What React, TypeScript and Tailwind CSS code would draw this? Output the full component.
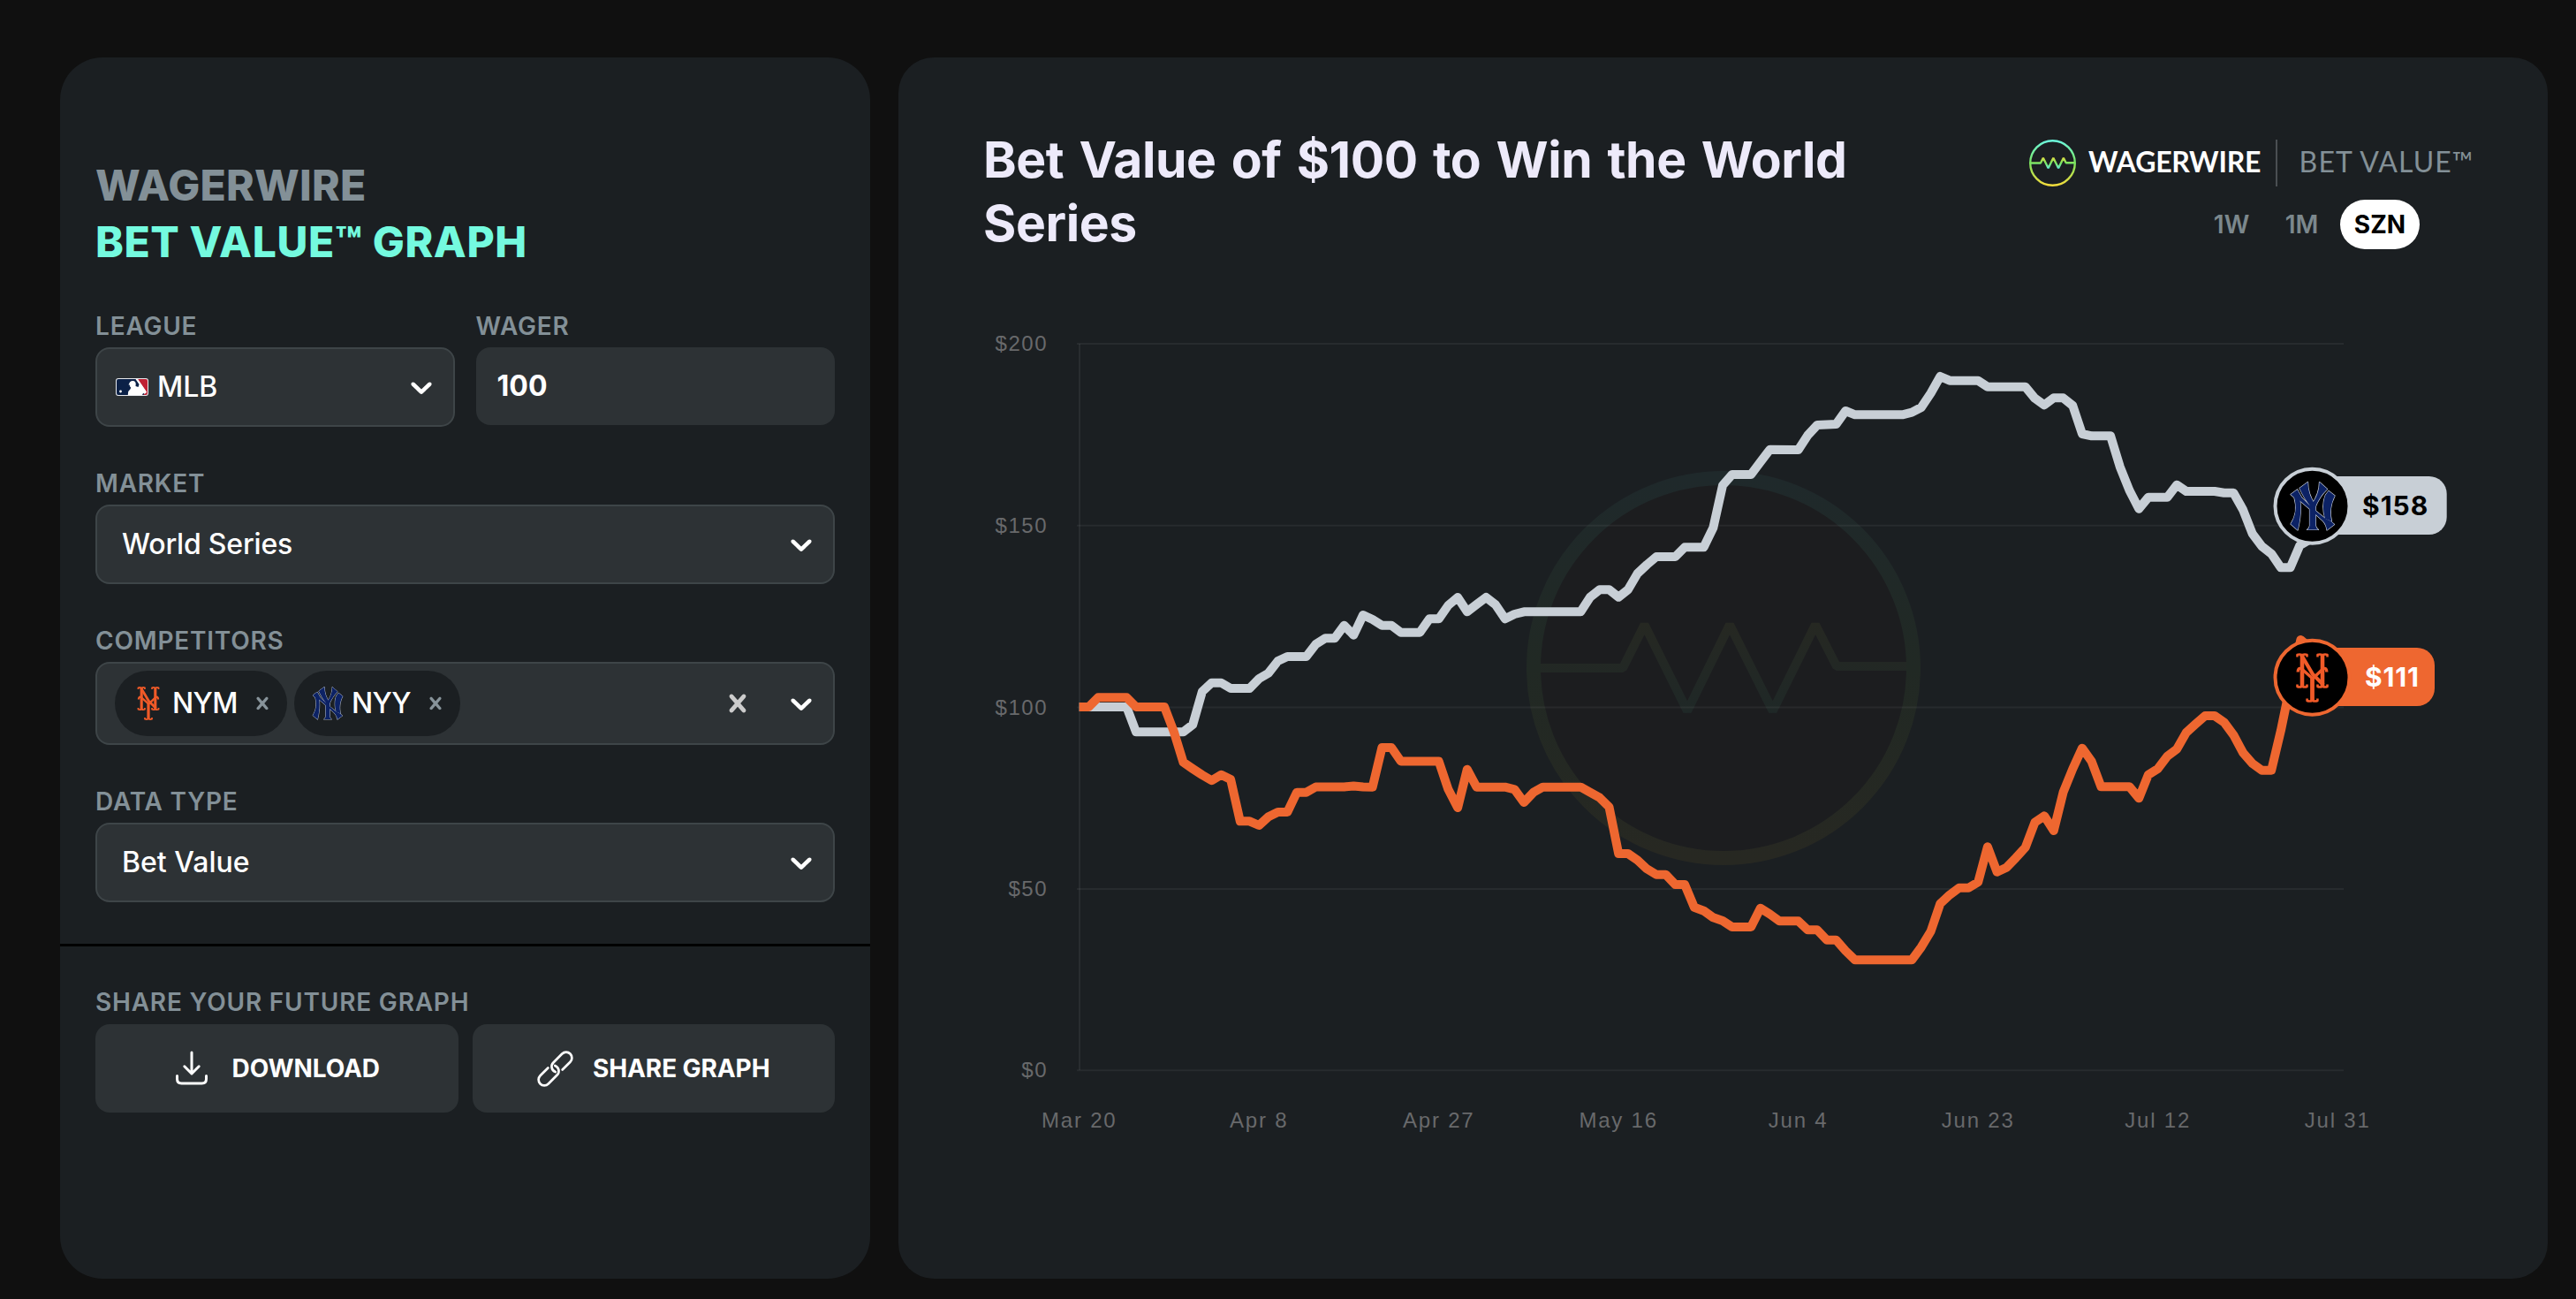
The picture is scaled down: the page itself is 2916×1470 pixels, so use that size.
import React from "react";

type Point = [number, number];

/* ---------- chart geometry ---------- */

const X0 = 1221.7;
const DAY = 10.71;

const toPath = (points: Point[]) =>
  points
    .map(([day, y], i) => `${i === 0 ? "M" : "L"}${(X0 + day * DAY).toFixed(1)} ${y}`)
    .join(" ");

const yankees: Point[] = [
  [0, 800], [5, 800], [6, 828.3], [11, 828.3], [12, 820], [13, 782.7], [14, 772.7], [15, 772.7],
  [16, 779], [18, 779], [19, 768], [20, 761.7], [21, 748], [22, 743], [24, 743], [25, 729],
  [26, 722.3], [27, 722.3], [28, 707.7], [29, 718.7], [30, 696], [31, 701], [32, 707.7], [33, 707.7],
  [34, 715.7], [36, 715.7], [37, 700.3], [38, 700.3], [39, 685], [40, 676], [41, 692.3], [42, 684],
  [43, 676], [44, 684.3], [45, 700.3], [46, 695], [47, 692.3], [53, 692.3], [54, 675.7], [55, 667.3],
  [56, 667.3], [57, 675.7], [58, 667.3], [59, 649], [60, 639], [61, 630], [63, 630], [64, 619.3],
  [66, 619.3], [67, 597.3], [68, 549.3], [69, 537], [71, 537], [72, 522.7], [73, 508.7], [76, 509],
  [77, 492.5], [78, 481], [80, 480], [81, 465], [82, 469.3], [87, 469.3], [88, 466.7], [89, 461],
  [90, 445], [91, 426], [92, 430.7], [95, 430.7], [96, 437.7], [100, 437.7], [101, 450.7], [102, 458.3],
  [103, 450.3], [104, 450.3], [105, 459], [106, 491], [107, 493.3], [109, 493.3], [110, 528.3],
  [111, 555], [112, 575.7], [113, 562.7], [115, 562.7], [116, 548.7], [117, 556], [120, 556],
  [121, 557.7], [122, 557.7], [123, 576.7], [124, 604], [125, 618.3], [126, 626.7], [127, 642.3],
  [128, 642.3], [129, 617.3], [130, 611], [130.3, 580],
];

const mets: Point[] = [
  [0, 800], [1, 800], [2, 789.3], [5, 789.3], [6, 800], [9, 800], [10, 828], [11, 862.7], [12, 870],
  [13, 877], [14, 883.3], [15, 876.7], [16, 882], [17, 929.3], [18, 929.3], [19, 934], [20, 924.3],
  [21, 919], [22, 919], [23, 896.7], [24, 896.7], [25, 890.5], [28, 890.5], [29, 889.5], [30, 890.5],
  [31, 890.7], [32, 846], [33, 846], [34, 861.5], [38, 861.5], [39, 893.3], [40, 914], [41, 870.7],
  [42, 890.7], [45, 890.7], [46, 893.3], [47, 908], [48, 896.7], [49, 890.7], [53, 890.7], [54, 896.7],
  [55, 902.7], [56, 913.3], [57, 966], [58, 966], [59, 973.3], [60, 983.3], [61, 989.7], [62, 989.7],
  [63, 1001], [64, 1001], [65, 1026.7], [66, 1030.7], [67, 1038.3], [68, 1042], [69, 1049], [71, 1049],
  [72, 1027.7], [73, 1034.5], [74, 1042.3], [76, 1042.3], [77, 1052.3], [78, 1052.3], [79, 1063.7],
  [80, 1063.7], [81, 1076], [82, 1086.3], [88, 1086.3], [89, 1071.7], [90, 1054], [91, 1022.7],
  [92, 1012.7], [93, 1004.7], [94, 1004.7], [95, 998.3], [96, 958.3], [97, 986.7], [98, 981.7],
  [99, 970.7], [100, 959], [101, 930.7], [102, 923.3], [103, 940], [104, 896.7], [105, 870],
  [106, 846.7], [107, 861.7], [108, 890.3], [111, 890.3], [112, 903.3], [113, 876.7], [114, 870],
  [115, 855.7], [116, 847.7], [117, 829], [118, 819.3], [119, 810], [120, 810], [121, 817.3],
  [122, 831.7], [123, 851.7], [124, 864], [125, 871.7], [126, 871.7], [127, 826.7], [128, 775],
  [129.1, 724], [130.3, 735],
];

const yTicks = [
  { label: "$200", y: 389 },
  { label: "$150", y: 594.7 },
  { label: "$100", y: 800.5 },
  { label: "$50", y: 1006 },
  { label: "$0", y: 1211.3 },
];

const xTicks = ["Mar 20", "Apr 8", "Apr 27", "May 16", "Jun 4", "Jun 23", "Jul 12", "Jul 31"];

/* ---------- icons and emblems ---------- */

function ChevronDown() {
  return (
    <svg viewBox="0 0 20 20" className="size-10 shrink-0 fill-white">
      <path d="M4.516 7.548c0.436-0.446 1.043-0.481 1.576 0l3.908 3.747 3.908-3.747c0.533-0.481 1.141-0.446 1.574 0 0.436 0.445 0.408 1.197 0 1.615-0.406 0.418-4.695 4.502-4.695 4.502-0.217 0.223-0.502 0.335-0.787 0.335s-0.57-0.112-0.789-0.335c0 0-4.287-4.084-4.695-4.502s-0.436-1.17 0-1.615z" />
    </svg>
  );
}

function Cross({ className }: { className: string }) {
  return (
    <svg viewBox="0 0 20 20" className={className}>
      <path d="M14.348 14.849c-0.469 0.469-1.229 0.469-1.697 0l-2.651-3.030-2.651 3.029c-0.469 0.469-1.229 0.469-1.697 0-0.469-0.469-0.469-1.229 0-1.697l2.758-3.15-2.759-3.152c-0.469-0.469-0.469-1.228 0-1.697s1.228-0.469 1.697 0l2.652 3.031 2.651-3.031c0.469-0.469 1.228-0.469 1.697 0s0.469 1.229 0 1.697l-2.758 3.152 2.758 3.15c0.469 0.469 0.469 1.229 0 1.698z" />
    </svg>
  );
}

function MlbEmblem() {
  return (
    <svg viewBox="0 0 37 20" className="h-5 w-[37px] shrink-0">
      <rect width="37" height="20" rx="3" fill="#e8eaee" />
      <path d="M3 1H23L33 15L32 19H3A2 2 0 0 1 1 17V3A2 2 0 0 1 3 1Z" fill="#0b2147" />
      <path d="M25 1H34A2 2 0 0 1 36 3V17A2 2 0 0 1 34 19H31L35 16Z" fill="#bf2033" />
      <path
        d="M14.5 7.5L16 4.5Q17 2.6 19.6 3Q22.6 3.4 22.7 6.4L22.5 9L25.5 10L26.5 7L22.5 1H25L35 15.5L33 17.5L31 17L30 19H13.8L14.2 15L16.8 12L17 10L16 9.6L15.8 7.6Z"
        fill="#fff"
      />
      <circle cx="5.5" cy="15" r="1.4" fill="#fff" />
    </svg>
  );
}

function MetsMark() {
  return (
    <g fill="none" stroke="#f05a28" strokeLinejoin="round">
      <path d="M7 2V38M30 2V38" strokeWidth="4.6" />
      <path d="M6 2L19 24L31 36" strokeWidth="4.2" />
      <path d="M2.2 21.5Q2.2 16.5 6 17.5L19 29L31 17.5Q34.8 16.5 34.8 21.5" strokeWidth="3.4" />
      <path d="M18.5 27V54" strokeWidth="4.8" />
      <path
        d="M1.5 4.6V2Q4 .8 7 2.2Q10 .8 12.5 2V4.6M24.5 4.6V2Q27 .8 30 2.2Q33 .8 35.5 2V4.6M1.5 35.4V38Q4 39.2 7 37.8Q10 39.2 12.5 38V35.4M24.5 35.4V38Q27 39.2 30 37.8Q33 39.2 35.5 38V35.4M12.6 51.5V54Q15.5 55.2 18.5 53.8Q21.5 55.2 24.4 54V51.5"
        strokeWidth="2.6"
      />
    </g>
  );
}

const yankeesShapes = [
  "M0.5 14.5L8 9C13 22 13 37 8.5 55L0.5 48C6.5 39 7.5 28 4.5 18Z",
  "M10.5 7.5L20 0.5C20 10 23 18 27.5 25L24.5 30C18.5 23 14 15 10.5 7.5Z",
  "M33 0.5L42 8.5C36 14 31 22 28 30L24 26C30 18 33 10 33 0.5Z",
  "M8 9L13 18L25 30L40 42Q46 44 50 48.5L41.5 55Q41 49 37 44.5L22 31L9 20Z",
  "M43.5 10.5L50.5 16C45.5 26 44.5 36 47 45L39.5 42C36.5 32 37 22 40 15Z",
  "M22 26H28.8V50Q29.5 53 32 54.5H19Q21.5 53 22 50Z",
];

function YankeesMark() {
  return (
    <g>
      <g fill="#c9cfd8" stroke="#c9cfd8" strokeWidth="1.2" strokeLinejoin="round">
        {yankeesShapes.map((d) => (
          <path key={d} d={d} />
        ))}
      </g>
      <g fill="#0c2265">
        {yankeesShapes.map((d) => (
          <path key={d} d={d} />
        ))}
      </g>
    </g>
  );
}

function DownloadIcon() {
  return (
    <svg viewBox="0 0 40 40" className="size-10 shrink-0" fill="none" stroke="#fff" strokeWidth="3" strokeLinecap="round" strokeLinejoin="round">
      <path d="M20 2V26M11.8 17.8L20 26L28.2 17.8" />
      <path d="M3.5 28.5V32Q3.5 37 8.5 37H31.5Q36.5 37 36.5 32V28.5" />
    </svg>
  );
}

function ChainIcon() {
  return (
    <svg viewBox="-20.5 -20.5 41 41" className="size-[41px] shrink-0 overflow-visible" fill="none" stroke="#fff" strokeWidth="2.7" strokeLinecap="round">
      <g transform="rotate(-45)">
        <path d="M5 6.5H17.5A6.5 6.5 0 0 0 17.5 -6.5H3.5A6.5 6.5 0 0 0 -2.4 2.7" />
        <path d="M-5 -6.5H-17.5A6.5 6.5 0 0 0 -17.5 6.5H-3.5A6.5 6.5 0 0 0 2.4 -2.7" />
      </g>
    </svg>
  );
}

function WireLogo() {
  return (
    <svg viewBox="1728 533 446 446" className="size-[53px] shrink-0">
      <defs>
        <linearGradient id="ring" x1="0" y1="0" x2="0" y2="1">
          <stop offset="0" stopColor="#6cf7dc" />
          <stop offset="0.5" stopColor="#7be35f" />
          <stop offset="1" stopColor="#f3dc3c" />
        </linearGradient>
        <linearGradient id="pulse" gradientUnits="userSpaceOnUse" x1="0" y1="700" x2="0" y2="810">
          <stop offset="0" stopColor="#e6df42" />
          <stop offset="0.5" stopColor="#7be35f" />
          <stop offset="1" stopColor="#62eedd" />
        </linearGradient>
      </defs>
      <circle cx="1951" cy="756" r="213" fill="none" stroke="url(#ring)" strokeWidth="20" />
      <path
        d="M1744 756H1837L1861.5 707L1910 804.5L1958 707L2006.7 804.5L2055 707L2079 754H2158"
        fill="none"
        stroke="url(#pulse)"
        strokeWidth="20"
        strokeLinejoin="bevel"
      />
    </svg>
  );
}

/* ---------- form pieces ---------- */

function Label({ children }: { children: React.ReactNode }) {
  return (
    <div className="whitespace-nowrap text-[28px] leading-[34px] font-semibold tracking-[0.8px] text-[#839097]">
      {children}
    </div>
  );
}

function SelectBox({ children }: { children: React.ReactNode }) {
  return (
    <div className="mt-[7px] flex h-[90px] items-center justify-between rounded-2xl border-2 border-[#3e4548] bg-[#2d3235] pr-4 pl-7 text-[32px] font-medium text-white">
      {children}
      <ChevronDown />
    </div>
  );
}

function Chip({ name, icon, className }: { name: string; icon: React.ReactNode; className: string }) {
  return (
    <div className={`flex h-[74px] items-center rounded-full bg-[#1b1f22] pr-3.5 pl-[19px] ${className}`}>
      {icon}
      <span className="ml-2 tracking-[-0.6px]">{name}</span>
      <Cross className="ml-auto size-7 fill-[#87939a]" />
    </div>
  );
}

function Sidebar() {
  return (
    <section className="h-[1382px] w-[917px] shrink-0 rounded-[48px] bg-[#1b1f22] pt-[113px]">
      <div className="px-10">
        <h1 className="whitespace-nowrap text-[48px] leading-[64px] font-extrabold">
          <span className="block tracking-[0.2px] text-[#839097]">WAGERWIRE</span>
          <span className="block tracking-[0.6px] text-[#74fadf]">BET VALUE™ GRAPH</span>
        </h1>

        <div className="mt-[46px] grid grid-cols-2 gap-6">
          <div>
            <Label>LEAGUE</Label>
            <div className="mt-[7px] flex h-[90px] items-center rounded-2xl border-2 border-[#3e4548] bg-[#2d3235] pr-4 pl-[21px] text-[32px] font-medium text-white">
              <MlbEmblem />
              <span className="mr-auto ml-2.5">MLB</span>
              <ChevronDown />
            </div>
          </div>
          <div>
            <Label>WAGER</Label>
            <div className="mt-[7px] flex h-[88px] items-center rounded-2xl bg-[#2d3235] pl-6 text-[32px] font-bold text-white">
              100
            </div>
          </div>
        </div>

        <div className="mt-[47px]">
          <Label>MARKET</Label>
          <SelectBox>
            <span className="tracking-[-0.2px]">World Series</span>
          </SelectBox>
        </div>

        <div className="mt-[47px]">
          <Label>COMPETITORS</Label>
          <div className="mt-[7px] flex h-[94px] items-center rounded-2xl border-2 border-[#3e4548] bg-[#2d3235] pr-4 pl-5 text-[32px] font-medium text-white">
            <div className="flex gap-2">
              <Chip
                name="NYM"
                className="w-[195px]"
                icon={
                  <svg viewBox="0 0 37 56" className="h-[38px] w-[38px]">
                    <MetsMark />
                  </svg>
                }
              />
              <Chip
                name="NYY"
                className="w-[188px]"
                icon={
                  <svg viewBox="0 0 51 56" className="h-[38px] w-[38px]">
                    <YankeesMark />
                  </svg>
                }
              />
            </div>
            <Cross className="mr-8 ml-auto size-10 fill-[#cccccc]" />
            <ChevronDown />
          </div>
        </div>

        <div className="mt-[47px]">
          <Label>DATA TYPE</Label>
          <SelectBox>
            <span>Bet Value</span>
          </SelectBox>
        </div>
      </div>

      <div className="mt-[47px] border-t-[3px] border-black px-10 pt-[46px]">
        <Label>SHARE YOUR FUTURE GRAPH</Label>
        <div className="mt-2 grid grid-cols-2 gap-4 text-[28px] font-bold tracking-[-0.1px] text-white">
          <button className="flex h-[100px] items-center justify-center gap-[26px] rounded-2xl bg-[#2d3235]">
            <DownloadIcon />
            DOWNLOAD
          </button>
          <button className="flex h-[100px] items-center justify-center gap-[22px] rounded-2xl bg-[#2d3235]">
            <ChainIcon />
            SHARE GRAPH
          </button>
        </div>
      </div>
    </section>
  );
}

/* ---------- chart panel ---------- */

function Chart() {
  return (
    <svg viewBox="1017 330 1867 1000" className="mt-[41px] block h-[1000px] w-[1867px]">
      <defs>
        <linearGradient id="mark-ring" x1="0" y1="0" x2="0" y2="1">
          <stop offset="0" stopColor="#1f292b" />
          <stop offset="0.5" stopColor="#212924" />
          <stop offset="1" stopColor="#272822" />
        </linearGradient>
        <linearGradient id="mark-pulse" gradientUnits="userSpaceOnUse" x1="0" y1="705" x2="0" y2="807">
          <stop offset="0" stopColor="#262822" />
          <stop offset="1" stopColor="#1f2827" />
        </linearGradient>
      </defs>

      <circle cx="1951" cy="756" r="215" fill="#1c1d1f" stroke="url(#mark-ring)" strokeWidth="16" />
      <path
        d="M1744 756H1837L1861.5 707L1910 804.5L1958 707L2006.7 804.5L2055 707L2079 754H2158"
        fill="none"
        stroke="url(#mark-pulse)"
        strokeWidth="10"
        strokeLinejoin="bevel"
      />

      {yTicks.map((t) => (
        <g key={t.label}>
          <path d={`M1219 ${t.y}H2653`} stroke="#fff" strokeOpacity="0.055" strokeWidth="2" />
          <text
            x="1186"
            y={t.y + 8}
            textAnchor="end"
            className="fill-[#68696b] font-['Liberation_Sans',sans-serif] text-[24px] tracking-[1.5px]"
          >
            {t.label}
          </text>
        </g>
      ))}
      <path d="M1222 389V1211" stroke="#fff" strokeOpacity="0.08" strokeWidth="1.5" />
      {xTicks.map((label, i) => (
        <text
          key={label}
          x={X0 + i * 19 * DAY}
          y="1276"
          textAnchor="middle"
          className="fill-[#68696b] font-['Liberation_Sans',sans-serif] text-[24px] tracking-[1.8px]"
        >
          {label}
        </text>
      ))}

      <path d={toPath(yankees)} fill="none" stroke="#c8cfd6" strokeWidth="10" strokeLinejoin="round" />
      <path d={toPath(mets)} fill="none" stroke="#ee6730" strokeWidth="10" strokeLinejoin="round" />

      <g>
        <path d="M2618 539H2749.7A20 20 0 0 1 2769.7 559V585A20 20 0 0 1 2749.7 605H2618Z" fill="#c8cfd6" />
        <circle cx="2617.5" cy="572.7" r="42" fill="#000" stroke="#c8cfd6" strokeWidth="4" />
        <g transform="translate(2592.5 545)">
          <YankeesMark />
        </g>
        <text x="2674" y="582.7" className="fill-black font-[Inter,sans-serif] text-[30px] font-bold tracking-[1px]">
          $158
        </text>
      </g>
      <g>
        <path d="M2618 733H2736A20 20 0 0 1 2756 753V779A20 20 0 0 1 2736 799H2618Z" fill="#ee6730" />
        <circle cx="2617.5" cy="766.7" r="42" fill="#000" stroke="#ee6730" strokeWidth="4" />
        <g transform="translate(2599 739)">
          <MetsMark />
        </g>
        <text x="2677" y="776.7" className="fill-white font-[Inter,sans-serif] text-[30px] font-bold tracking-[0.8px]">
          $111
        </text>
      </g>
    </svg>
  );
}

function ChartPanel() {
  return (
    <section className="h-[1382px] w-[1867px] shrink-0 rounded-[40px] bg-[#1b1f22] pt-20">
      <header className="flex h-36 justify-between pr-[83px] pl-24">
        <h2 className="whitespace-nowrap text-[57px] leading-[72px] font-bold tracking-[-0.4px] text-[#edeafa] [word-spacing:4px]">
          Bet Value of $100 to Win the World
          <br />
          Series
        </h2>
        <div className="flex w-[504px] flex-col pt-3">
          <div className="flex h-[54px] items-center font-[Lato,sans-serif] text-[32px] whitespace-nowrap">
            <WireLogo />
            <span className="mt-[-3px] ml-3.5 w-[214px] font-bold tracking-[-0.25px] text-white">WAGERWIRE</span>
            <span className="h-[53px] w-0.5 bg-[#4a4f53]" />
            <span className="mt-[-3px] ml-[25px] tracking-[1.1px] text-[#839097]">BET VALUE™</span>
          </div>
          <nav className="mt-[15px] mr-[62px] flex h-14 items-center justify-end text-center text-[28px] font-semibold text-[#7c888d]">
            <span className="w-[72px]">1W</span>
            <span className="w-[87px]">1M</span>
            <span className="flex h-14 w-[90px] items-center justify-center rounded-full bg-white font-bold text-black">
              SZN
            </span>
          </nav>
        </div>
      </header>
      <Chart />
    </section>
  );
}

export default function App() {
  return (
    <main className="flex h-[1470px] w-[2916px] gap-8 overflow-hidden bg-[#101010] pt-[65px] pl-[68px] font-[Inter,sans-serif]">
      <Sidebar />
      <ChartPanel />
    </main>
  );
}
